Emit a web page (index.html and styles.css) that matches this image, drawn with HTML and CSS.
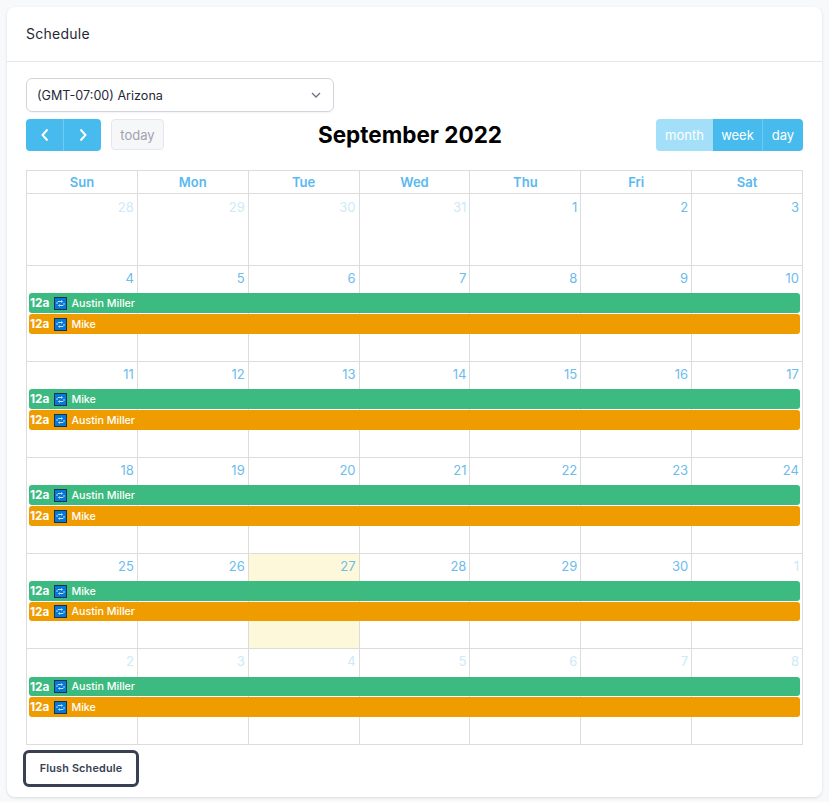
FILE: index.html
```html
<!DOCTYPE html>
<html lang="en">
<head>
<meta charset="utf-8">
<title>Schedule</title>
<link rel="stylesheet" href="styles.css">
</head>
<body>
<main class="card">
  <header class="card-head">Schedule</header>
  <section class="card-body">
    <div class="select">
      <span>(GMT-07:00) Arizona</span>
      <svg class="chev" width="10" height="6" viewBox="0 0 10 6"><path d="M1 1l4 4 4-4" fill="none" stroke="#6b7280" stroke-width="1.300"/></svg>
    </div>
    <div class="toolbar">
      <div class="left">
        <div class="btn-group">
          <button class="btn nav"><svg width="10" height="14" viewBox="0 0 10 14"><path d="M7.500 1.500 2.500 7l5 5.500" fill="none" stroke="#fff" stroke-width="2"/></svg></button>
          <button class="btn nav"><svg width="10" height="14" viewBox="0 0 10 14"><path d="M2.500 1.500 7.500 7l-5 5.500" fill="none" stroke="#fff" stroke-width="2"/></svg></button>
        </div>
        <button class="today">today</button>
      </div>
      <h2 class="title">September 2022</h2>
      <div class="btn-group">
        <button class="btn active v-month">month</button>
        <button class="btn v-week">week</button>
        <button class="btn v-day">day</button>
      </div>
    </div>
    <div class="cal">
      <div class="dow"><div>Sun</div><div>Mon</div><div>Tue</div><div>Wed</div><div>Thu</div><div>Fri</div><div>Sat</div></div>

      <div class="week first">
        <div class="day other">28</div><div class="day other">29</div><div class="day other">30</div><div class="day other">31</div><div class="day">1</div><div class="day">2</div><div class="day">3</div>
      </div>

      <div class="week">
        <div class="day">4</div><div class="day">5</div><div class="day">6</div><div class="day">7</div><div class="day">8</div><div class="day">9</div><div class="day">10</div>
        <div class="ev green r1"><b>12a</b><i class="rep"><svg width="9" height="7" viewBox="0 0 9 7"><path d="M1 4V2.500L2 1.500H6M8 3V4.500L7 5.500H3M5.500 .5l1 1-1 1M3.500 4.500l-1 1 1 1" fill="none" stroke="#d6eaff" stroke-width=".9"/></svg></i><span>Austin Miller</span></div>
        <div class="ev orange r2"><b>12a</b><i class="rep"><svg width="9" height="7" viewBox="0 0 9 7"><path d="M1 4V2.500L2 1.500H6M8 3V4.500L7 5.500H3M5.500 .5l1 1-1 1M3.500 4.500l-1 1 1 1" fill="none" stroke="#d6eaff" stroke-width=".9"/></svg></i><span>Mike</span></div>
      </div>

      <div class="week">
        <div class="day">11</div><div class="day">12</div><div class="day">13</div><div class="day">14</div><div class="day">15</div><div class="day">16</div><div class="day">17</div>
        <div class="ev green r1"><b>12a</b><i class="rep"><svg width="9" height="7" viewBox="0 0 9 7"><path d="M1 4V2.500L2 1.500H6M8 3V4.500L7 5.500H3M5.500 .5l1 1-1 1M3.500 4.500l-1 1 1 1" fill="none" stroke="#d6eaff" stroke-width=".9"/></svg></i><span>Mike</span></div>
        <div class="ev orange r2"><b>12a</b><i class="rep"><svg width="9" height="7" viewBox="0 0 9 7"><path d="M1 4V2.500L2 1.500H6M8 3V4.500L7 5.500H3M5.500 .5l1 1-1 1M3.500 4.500l-1 1 1 1" fill="none" stroke="#d6eaff" stroke-width=".9"/></svg></i><span>Austin Miller</span></div>
      </div>

      <div class="week">
        <div class="day">18</div><div class="day">19</div><div class="day">20</div><div class="day">21</div><div class="day">22</div><div class="day">23</div><div class="day">24</div>
        <div class="ev green r1"><b>12a</b><i class="rep"><svg width="9" height="7" viewBox="0 0 9 7"><path d="M1 4V2.500L2 1.500H6M8 3V4.500L7 5.500H3M5.500 .5l1 1-1 1M3.500 4.500l-1 1 1 1" fill="none" stroke="#d6eaff" stroke-width=".9"/></svg></i><span>Austin Miller</span></div>
        <div class="ev orange r2"><b>12a</b><i class="rep"><svg width="9" height="7" viewBox="0 0 9 7"><path d="M1 4V2.500L2 1.500H6M8 3V4.500L7 5.500H3M5.500 .5l1 1-1 1M3.500 4.500l-1 1 1 1" fill="none" stroke="#d6eaff" stroke-width=".9"/></svg></i><span>Mike</span></div>
      </div>

      <div class="week short">
        <div class="day">25</div><div class="day">26</div><div class="day today-cell">27</div><div class="day">28</div><div class="day">29</div><div class="day">30</div><div class="day other">1</div>
        <div class="ev green r1"><b>12a</b><i class="rep"><svg width="9" height="7" viewBox="0 0 9 7"><path d="M1 4V2.500L2 1.500H6M8 3V4.500L7 5.500H3M5.500 .5l1 1-1 1M3.500 4.500l-1 1 1 1" fill="none" stroke="#d6eaff" stroke-width=".9"/></svg></i><span>Mike</span></div>
        <div class="ev orange r2"><b>12a</b><i class="rep"><svg width="9" height="7" viewBox="0 0 9 7"><path d="M1 4V2.500L2 1.500H6M8 3V4.500L7 5.500H3M5.500 .5l1 1-1 1M3.500 4.500l-1 1 1 1" fill="none" stroke="#d6eaff" stroke-width=".9"/></svg></i><span>Austin Miller</span></div>
      </div>

      <div class="week last">
        <div class="day other">2</div><div class="day other">3</div><div class="day other">4</div><div class="day other">5</div><div class="day other">6</div><div class="day other">7</div><div class="day other">8</div>
        <div class="ev green r1"><b>12a</b><i class="rep"><svg width="9" height="7" viewBox="0 0 9 7"><path d="M1 4V2.500L2 1.500H6M8 3V4.500L7 5.500H3M5.500 .5l1 1-1 1M3.500 4.500l-1 1 1 1" fill="none" stroke="#d6eaff" stroke-width=".9"/></svg></i><span>Austin Miller</span></div>
        <div class="ev orange r2"><b>12a</b><i class="rep"><svg width="9" height="7" viewBox="0 0 9 7"><path d="M1 4V2.500L2 1.500H6M8 3V4.500L7 5.500H3M5.500 .5l1 1-1 1M3.500 4.500l-1 1 1 1" fill="none" stroke="#d6eaff" stroke-width=".9"/></svg></i><span>Mike</span></div>
      </div>
    </div>
    <button class="flush">Flush Schedule</button>
  </section>
</main>
</body>
</html>
```
FILE: styles.css
```css
* { box-sizing: border-box; }
html, body { margin: 0; height: 100%; }
body {
  background: #f8f9fb;
  font-family: Inter, "Liberation Sans", sans-serif;
  padding: 7px 7px 0;
  overflow: hidden;
}
button { font-family: inherit; cursor: pointer; }
.card {
  width: 815px;
  height: 790px;
  background: #fff;
  border-radius: 8px;
  box-shadow: 0 1px 3px rgba(0,0,0,.12);
}
.card-head {
  height: 55px;
  padding: 0 19px 2px;
  display: flex;
  align-items: center;
  font-size: 14px;
  color: #1f2937;
  border-bottom: 1px solid #e5e7eb;
  letter-spacing: .25px;
}
.card-body { padding: 16px 19px 0; }
.select {
  width: 308px;
  height: 34px;
  border: 1px solid #d1d5db;
  border-radius: 6px;
  padding: 0 12px 0 10px;
  display: flex;
  align-items: center;
  justify-content: space-between;
  font-size: 12.600px;
  color: #1f2937;
  box-shadow: 0 1px 2px rgba(0,0,0,.05);
}
.toolbar {
  margin-top: 7px;
  width: 777px;
  height: 32px;
  display: flex;
  align-items: flex-start;
  justify-content: space-between;
}
.left { display: flex; align-items: flex-start; gap: 10px; width: 138px; }
.btn-group { display: flex; height: 32px; }
.btn {
  height: 32px;
  border: 0;
  background: #47bbed;
  color: #fff;
  font-size: 13px;
  padding: 0;
  border-left: 1px solid #6fcbf2;
}
.btn:first-child { border-left: 0; border-radius: 4px 0 0 4px; }
.btn:last-child { border-radius: 0 4px 4px 0; }
.btn.active { background: #a3dff8; }
.v-month { width: 57px; }
.v-week { width: 49px; border-left: 0; }
.v-day { width: 41px; }
.btn.nav { width: 38px; display: flex; align-items: center; justify-content: center; }
.btn.nav:first-child { width: 37px; }
.today {
  width: 53px;
  height: 31px;
  background: #f6f7f9;
  border: 1px solid #e5e7eb;
  border-radius: 4px;
  color: #9ca3af;
  font-size: 13px;
  padding: 0;
}
.title { margin: 0; font-size: 22.500px; line-height: 32px; font-weight: 700; color: #000; }
.cal {
  margin-top: 19px;
  width: 777px;
  border-left: 1px solid #dcdcdc;
  border-top: 1px solid #dcdcdc;
}
.dow {
  display: grid;
  grid-template-columns: repeat(7, 1fr);
  height: 23px;
}
.dow div {
  border-right: 1px solid #dcdcdc;
  border-bottom: 1px solid #dcdcdc;
  text-align: center;
  font-size: 13px;
  font-weight: 600;
  color: #5ab9ee;
  line-height: 22px;
}
.week {
  display: grid;
  grid-template-columns: repeat(7, 1fr);
  grid-template-rows: 27px 21px 21px 1fr;
  height: 96px;
}
.week.first { height: 72px; }
.week.short { height: 95px; }
.day {
  grid-row: 1 / -1;
  border-right: 1px solid #dcdcdc;
  border-bottom: 1px solid #dcdcdc;
  text-align: right;
  padding: 4px 3px 0 0;
  font-size: 13px;
  line-height: 17px;
  color: #6cbcec;
}
.day:nth-child(1) { grid-column: 1; }
.day:nth-child(2) { grid-column: 2; }
.day:nth-child(3) { grid-column: 3; }
.day:nth-child(4) { grid-column: 4; }
.day:nth-child(5) { grid-column: 5; }
.day:nth-child(6) { grid-column: 6; }
.day:nth-child(7) { grid-column: 7; }
.day.other { color: #cdeaf9; }
.week.first .day { padding-top: 5px; }
.today-cell { background: #fdf8d9; }
.ev {
  grid-column: 1 / -1;
  margin: 0 3px 1px 2px;
  border-radius: 3px;
  display: flex;
  align-items: center;
  height: 20px;
  padding-left: 1px;
  color: #fff;
  font-size: 10.700px;
  font-weight: 500;
  white-space: nowrap;
}
.ev b { font-weight: 700; font-size: 11.800px; }
.ev.r1 { grid-row: 2; }
.ev.r2 { grid-row: 3; }
.week.short .r2 { height: 19px; }
.week.last .r1 { height: 19px; margin-top: 1px; }
.green { background: #3dba7f; }
.orange { background: #ef9c00; }
.rep {
  width: 13px;
  height: 13px;
  margin: 0 4px 0 5px;
  background: #0678d6;
  border: 1px solid #17324d;
  display: flex;
  align-items: center;
  justify-content: center;
}
.flush {
  display: block;
  margin: 5px 0 0 -3px;
  width: 116px;
  height: 37px;
  background: #fff;
  border: 3px solid #374151;
  border-radius: 6px;
  font-size: 10.800px;
  font-weight: 600;
  color: #374151;
  letter-spacing: .2px;
  padding: 0;
}
```
